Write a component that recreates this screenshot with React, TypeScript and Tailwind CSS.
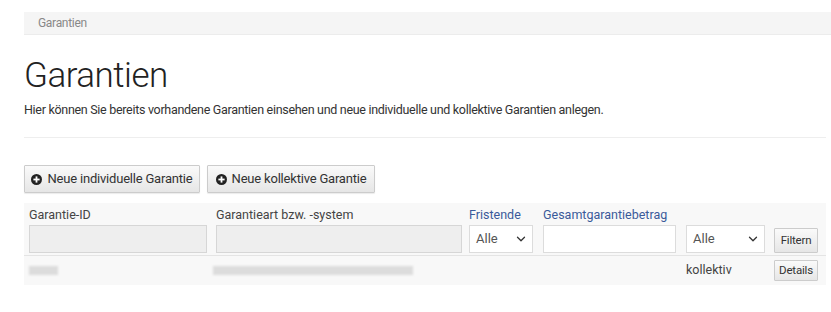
import { ChevronDown } from 'lucide-react'

function PlusCircle() {
  return (
    <svg viewBox="0 0 16 16" className="w-[11px] h-[11px]">
      <circle cx="8" cy="8" r="8" fill="#222" />
      <rect x="3.5" y="6.7" width="9" height="2.6" fill="#fff" />
      <rect x="6.7" y="3.5" width="2.6" height="9" fill="#fff" />
    </svg>
  )
}

function Blur({ w }: { w: number }) {
  return <div className="h-[9px] bg-[#dcdcdc] blur-[1px]" style={{ width: w }} />
}

export default function App() {
  return (
    <div className="w-[831px] h-[312px] bg-white overflow-hidden text-[#333]" style={{ fontFamily: 'Roboto, "Open Sans", sans-serif' }}>
      <div className="pt-3 pl-6">
        {/* breadcrumb */}
        <div className="h-[23px] bg-[#f5f5f5] border-b border-[#ececec] flex items-center pl-[14px]">
          <span className="text-[12px] text-[#888] tracking-[-0.3px]">Garantien</span>
        </div>

        <div className="pr-[5px]">
          <h1 className="mt-[21px] text-[35px] font-light leading-[40px] tracking-[-0.5px] text-[#222]">Garantien</h1>
          <p className="mt-[6px] text-[12.5px] text-[#333] tracking-[-0.3px] leading-[16px]">
            Hier können Sie bereits vorhandene Garantien einsehen und neue individuelle und kollektive Garantien anlegen.
          </p>
          <div className="mt-[19px] border-t border-[#eee]" />

          <div className="mt-[27px] flex gap-[7px]">
            <button className="h-[28px] w-[176px] flex items-center justify-center gap-[5px] border border-[#ccc] rounded-[1px] bg-gradient-to-b from-[#fafafa] to-[#e6e6e6] text-[13px] text-[#333] tracking-[-0.2px] shadow-[0_1px_1px_rgba(0,0,0,0.08)]">
              <PlusCircle />
              Neue individuelle Garantie
            </button>
            <button className="h-[28px] w-[168px] flex items-center justify-center gap-[5px] border border-[#ccc] rounded-[1px] bg-gradient-to-b from-[#fafafa] to-[#e6e6e6] text-[13px] text-[#333] tracking-[-0.2px] shadow-[0_1px_1px_rgba(0,0,0,0.08)]">
              <PlusCircle />
              Neue kollektive Garantie
            </button>
          </div>

          {/* table */}
          <div className="mt-[10px] bg-[#f8f8f8]">
            <div className="flex items-end px-[5px] pt-[4px] pb-[2px] border-b border-[#e4e4e4]">
              <div className="w-[178px] mr-[9px]">
                <div className="text-[12.5px] text-[#444] leading-[16px] mb-[2px]">Garantie-ID</div>
                <div className="h-[28px] bg-[#eeeeee] border border-[#d6d6d6]" />
              </div>
              <div className="w-[246px] mr-[7px]">
                <div className="text-[12.5px] text-[#444] leading-[16px] mb-[2px]">Garantieart bzw. -system</div>
                <div className="h-[28px] bg-[#eeeeee] border border-[#d6d6d6]" />
              </div>
              <div className="w-[64px] mr-[10px]">
                <div className="text-[12.5px] text-[#3a5a9a] leading-[16px] mb-[2px]">Fristende</div>
                <div className="h-[28px] bg-white border border-[#dcdcdc] flex items-center justify-between pl-[6px] pr-[4px] text-[13px] text-[#555]">
                  Alle
                  <ChevronDown className="w-[14px] h-[14px] text-[#333]" strokeWidth={2.2} />
                </div>
              </div>
              <div className="w-[133px] mr-[10px]">
                <div className="text-[12.5px] text-[#3a5a9a] leading-[16px] mb-[2px]">Gesamtgarantiebetrag</div>
                <div className="h-[28px] bg-white border border-[#dcdcdc]" />
              </div>
              <div className="w-[79px] mr-[9px]">
                <div className="h-[28px] bg-white border border-[#dcdcdc] flex items-center justify-between pl-[6px] pr-[4px] text-[13px] text-[#555]">
                  Alle
                  <ChevronDown className="w-[14px] h-[14px] text-[#333]" strokeWidth={2.2} />
                </div>
              </div>
              <button className="h-[25px] w-[44px] border border-[#ccc] rounded-[1px] bg-gradient-to-b from-[#fafafa] to-[#e6e6e6] text-[11.5px] text-[#333] tracking-[-0.2px]">
                Filtern
              </button>
            </div>
            <div className="flex items-center h-[29px] px-[5px]">
              <div className="w-[184px]"><Blur w={29} /></div>
              <div className="w-[473px]"><Blur w={200} /></div>
              <div className="w-[88px] text-[12.5px] text-[#444]">kollektiv</div>
              <button className="h-[21px] w-[44px] border border-[#ccc] rounded-[1px] bg-gradient-to-b from-[#fafafa] to-[#e6e6e6] text-[11.5px] text-[#333] tracking-[-0.2px]">
                Details
              </button>
            </div>
          </div>
        </div>
      </div>
    </div>
  )
}
